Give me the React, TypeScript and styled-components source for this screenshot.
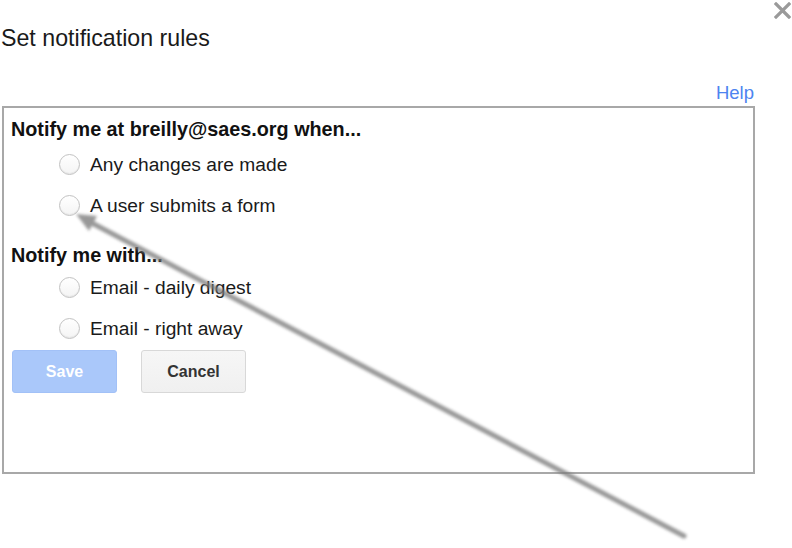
import React from "react";
import styled, { createGlobalStyle } from "styled-components";

const Global = createGlobalStyle`
  html, body { margin: 0; padding: 0; background: #ffffff; }
  body { font-family: "Liberation Sans", Arial, sans-serif; color: #222; }
`;

const Page = styled.div`
  position: relative;
  width: 792px;
  height: 548px;
  overflow: hidden;
  background: #fff;
`;

const Title = styled.h1`
  margin: 0;
  padding: 25px 0 0 1px;
  font-size: 23.2px;
  font-weight: normal;
  line-height: 26px;
  color: #1a1a1a;
`;

const Close = styled.button`
  position: absolute;
  top: 2px;
  right: 1px;
  width: 17px;
  height: 17px;
  padding: 0;
  border: 0;
  background: transparent;
  cursor: pointer;
`;

const HelpRow = styled.div`
  display: flex;
  justify-content: flex-end;
  width: 755px;
  margin-top: 31px;
`;

const HelpLink = styled.a`
  font-size: 18.5px;
  line-height: 22px;
  color: #4d84f0;
  text-decoration: none;
  margin-right: 1px;
`;

const Panel = styled.div`
  box-sizing: border-box;
  margin: 2px 0 0 2px;
  width: 753px;
  height: 368px;
  border: 2px solid #a8a8a8;
  padding: 10px 0 0 7px;
  display: flex;
  flex-direction: column;
`;

const Heading = styled.div<{ $gap?: number }>`
  font-size: 19.8px;
  font-weight: bold;
  line-height: 22px;
  color: #111;
  margin-top: ${(p) => p.$gap ?? 0}px;
`;

const Options = styled.div<{ $gap?: number }>`
  display: flex;
  flex-direction: column;
  padding-left: 48px;
  margin-top: ${(p) => p.$gap ?? 4}px;
`;

const Option = styled.label`
  display: flex;
  align-items: center;
  gap: 10px;
  height: 41px;
  font-size: 19.2px;
  line-height: 22px;
  color: #1a1a1a;
  cursor: pointer;
`;

const Radio = styled.span`
  box-sizing: border-box;
  width: 21px;
  height: 21px;
  border-radius: 50%;
  border: 1px solid #c2c2c2;
  background: linear-gradient(#ffffff, #f4f4f4);
  box-shadow: inset 0 -1px 1px rgba(0, 0, 0, 0.06);
  flex: none;
`;

const OptionText = styled.span`
  position: relative;
  top: 0px;
`;

const Buttons = styled.div`
  display: flex;
  gap: 24px;
  margin-top: 1px;
  padding-left: 1px;
`;

const Button = styled.button<{ $primary?: boolean }>`
  box-sizing: border-box;
  width: 105px;
  height: 43px;
  border-radius: 3px;
  font-family: "Liberation Sans", Arial, sans-serif;
  font-size: 16px;
  font-weight: bold;
  border: 1px solid ${(p) => (p.$primary ? "#a2c1f7" : "#d8d8d8")};
  background: ${(p) =>
    p.$primary ? "#aac8fa" : "linear-gradient(#f6f6f6, #f0f0f0)"};
  color: ${(p) => (p.$primary ? "#ffffff" : "#333333")};
  cursor: pointer;
`;

const Overlay = styled.svg`
  position: absolute;
  left: 0;
  top: 0;
  pointer-events: none;
`;

export default function App() {
  return (
    <Page>
      <Global />
      <Title>Set notification rules</Title>
      <Close aria-label="Close">
        <svg width="17" height="17" viewBox="0 0 17 17">
          <path
            d="M2 2 L15 15 M15 2 L2 15"
            stroke="#9a9a9a"
            strokeWidth="3.2"
            strokeLinecap="square"
          />
        </svg>
      </Close>
      <HelpRow>
        <HelpLink href="#">Help</HelpLink>
      </HelpRow>
      <Panel>
        <Heading>Notify me at breilly@saes.org when...</Heading>
        <Options>
          <Option>
            <Radio />
            <OptionText>Any changes are made</OptionText>
          </Option>
          <Option>
            <Radio />
            <OptionText>A user submits a form</OptionText>
          </Option>
        </Options>
        <Heading $gap={18}>Notify me with...</Heading>
        <Options $gap={1}>
          <Option>
            <Radio />
            <OptionText>Email - daily digest</OptionText>
          </Option>
          <Option>
            <Radio />
            <OptionText>Email - right away</OptionText>
          </Option>
        </Options>
        <Buttons>
          <Button $primary>Save</Button>
          <Button>Cancel</Button>
        </Buttons>
      </Panel>
      <Overlay width="792" height="548" viewBox="0 0 792 548">
        <defs>
          <filter id="blur" x="-10%" y="-10%" width="120%" height="120%">
            <feGaussianBlur stdDeviation="1.5" />
          </filter>
        </defs>
        <g filter="url(#blur)" opacity="0.78">
          <line
            x1="684"
            y1="536"
            x2="90"
            y2="222"
            stroke="#7c7c7c"
            strokeWidth="5"
            strokeLinecap="round"
          />
          <path d="M76 214 L97 216 L89 231 Z" fill="#7c7c7c" />
        </g>
      </Overlay>
    </Page>
  );
}
